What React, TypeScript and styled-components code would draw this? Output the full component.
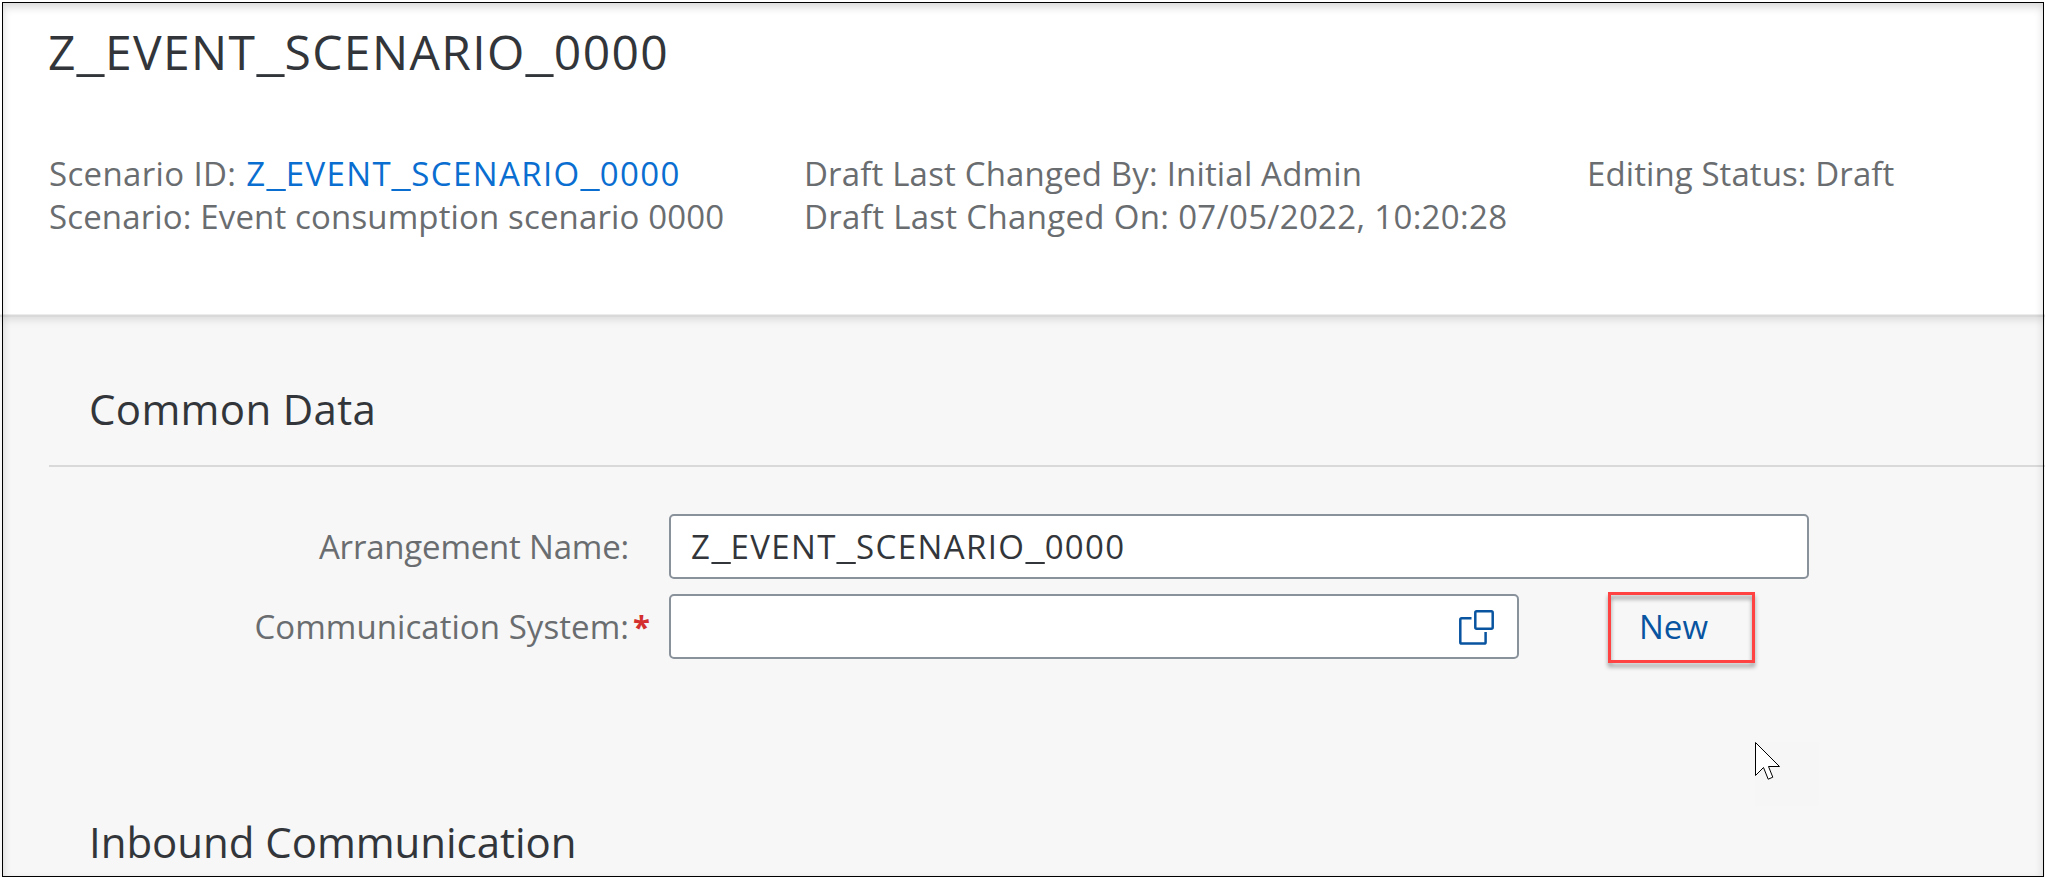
import React, { Fragment } from 'react';
import styled, { createGlobalStyle } from 'styled-components';

const GlobalStyle = createGlobalStyle`
  * { box-sizing: border-box; }
  html, body { margin: 0; height: 100%; overflow: hidden; }
  body { background: #f7f7f7; font-family: "Open Sans", "Noto Sans", sans-serif; }
`;

const Page = styled.div`
  position: relative;
  width: 100%;
  height: 877px;
  overflow: hidden;
  background: #f7f7f7;
  color: #32363a;
  font-size: 33px;
`;

const Frame = styled.div`
  position: absolute;
  inset: 2px 1px 0 2px;
  border: 1px solid #000;
  box-shadow: inset 0 4px 8px rgba(0, 0, 0, 0.16);
  pointer-events: none;
`;

const Header = styled.header`
  height: 317px;
  padding: 19px 0 0 49px;
  background: #fff;
  border-bottom: 2px solid #d9d9d9;
  box-shadow: inset 0 -1px 0 #ececec, 0 2px 9px rgba(0, 0, 0, 0.13);
`;

const Title = styled.h1`
  margin: 0 0 67px -1px;
  font-size: 48px;
  font-weight: 400;
  line-height: 66px;
  letter-spacing: 1.4px;
`;

/* Technical names are set with wide underscores that touch the letters. */
const Underscore = styled.span`
  display: inline-block;
  margin: 0 0.073em;
  letter-spacing: 0;
  transform: scaleX(1.33);
`;

const Facts = styled.div`
  display: grid;
  grid-template-columns: 755px 783px auto;
`;

const FactColumn = styled.div`
  display: flex;
  flex-direction: column;
`;

const Fact = styled.div<{ $tracking: number }>`
  line-height: 43px;
  color: #6a6d70;
  white-space: pre;
  letter-spacing: ${(p) => p.$tracking}px;
`;

const Link = styled.a`
  margin-left: 1px;
  color: #0a6ed1;
  text-decoration: none;
  letter-spacing: 1.38px;
`;

const Content = styled.main`
  display: flex;
  flex-direction: column;
  gap: 155px;
  padding: 64px 0 0 49px;
`;

const Section = styled.section`
  flex: none;
`;

const SectionTitle = styled.h2<{ $tracking: number }>`
  margin: 0;
  padding: 0 0 28px 40px;
  font-size: 42px;
  font-weight: 400;
  line-height: 56px;
  letter-spacing: ${(p) => p.$tracking}px;
  border-bottom: 2px solid #d9d9d9;
`;

const Form = styled.div`
  display: flex;
  flex-direction: column;
  gap: 15px;
  padding-top: 47px;
`;

const Row = styled.div`
  display: flex;
  height: 65px;
  line-height: 65px;
`;

const Label = styled.label<{ $tracking: number }>`
  width: 580px;
  text-align: right;
  color: #6a6d70;
  letter-spacing: ${(p) => p.$tracking}px;
`;

const Marker = styled.span`
  width: 40px;
  padding-left: 4px;
  color: #d3302f;
  font-size: 31px;
  font-weight: 700;
`;

const Field = styled.div<{ $width: number }>`
  display: flex;
  align-items: center;
  width: ${(p) => p.$width}px;
  padding: 0 23px 0 20px;
  line-height: 61px;
  letter-spacing: 1.38px;
  background: #fff;
  border: 2px solid #89919a;
  border-radius: 5px;
`;

const HelpIcon = styled.svg`
  display: block;
  width: 35px;
  height: 35px;
  margin: 2px 0 0 auto;
`;

const NewButton = styled.button`
  position: relative;
  width: 147px;
  height: 71px;
  margin: -2px 0 0 89px;
  padding: 0 0 2px 31px;
  border: 0;
  background: transparent;
  color: #0854a0;
  font: inherit;
  line-height: 69px;
  text-align: left;
  &::after {
    content: "";
    position: absolute;
    inset: 0;
    border: 3px solid #ff4343;
    filter: drop-shadow(0 4px 2px rgba(0, 0, 0, 0.38));
  }
`;

const Pointer = styled.svg`
  position: absolute;
  left: 1755px;
  top: 742px;
  width: 64px;
  height: 64px;
  background: #f6f6f6;
`;

const TechnicalName = ({ name }: { name: string }) => (
  <span>
    {name.split('_').map((part, i) => (
      <Fragment key={i}>
        {i > 0 && <Underscore>_</Underscore>}
        {part}
      </Fragment>
    ))}
  </span>
);

const scenario = 'Z_EVENT_SCENARIO_0000';

export default function App() {
  return (
    <Page>
      <GlobalStyle />
      <Header>
        <Title>
          <TechnicalName name={scenario} />
        </Title>
        <Facts>
          <FactColumn>
            <Fact $tracking={0.35}>
              Scenario ID: <Link><TechnicalName name={scenario} /></Link>
            </Fact>
            <Fact $tracking={0.14}>Scenario: Event consumption scenario 0000</Fact>
          </FactColumn>
          <FactColumn>
            <Fact $tracking={0.17}>Draft Last Changed By: Initial Admin</Fact>
            <Fact $tracking={0.32}>Draft Last Changed On: 07/05/2022, 10:20:28</Fact>
          </FactColumn>
          <FactColumn>
            <Fact $tracking={0.09}>Editing Status: Draft</Fact>
          </FactColumn>
        </Facts>
      </Header>
      <Content>
        <Section>
          <SectionTitle $tracking={0.34}>Common Data</SectionTitle>
          <Form>
            <Row>
              <Label $tracking={-0.2}>Arrangement Name:</Label>
              <Marker />
              <Field $width={1140}>
                <TechnicalName name={scenario} />
              </Field>
            </Row>
            <Row>
              <Label $tracking={0.06}>Communication System:</Label>
              <Marker>*</Marker>
              <Field $width={850}>
                <HelpIcon viewBox="0 0 35 35" fill="none" stroke="#0854a0" strokeWidth="2.5">
                  <path d="M12.5 8.3H2.7Q1.3 8.3 1.3 9.7V32.2Q1.3 33.6 2.7 33.6H25.2Q26.6 33.6 26.6 32.2V22" />
                  <rect x="16.3" y="1.3" width="17.4" height="17.4" rx="1.4" />
                </HelpIcon>
              </Field>
              <NewButton>New</NewButton>
            </Row>
          </Form>
        </Section>
        <Section>
          <SectionTitle $tracking={-0.04}>Inbound Communication</SectionTitle>
        </Section>
      </Content>
      <Pointer viewBox="0 0 64 64">
        <path
          d="M.5.5V33.5L8.5 25.5L13.2 37.2L17.8 35.2L13.5 24.5H24.5Z"
          fill="#fff"
          stroke="#000"
          strokeWidth="1"
        />
      </Pointer>
      <Frame />
    </Page>
  );
}
